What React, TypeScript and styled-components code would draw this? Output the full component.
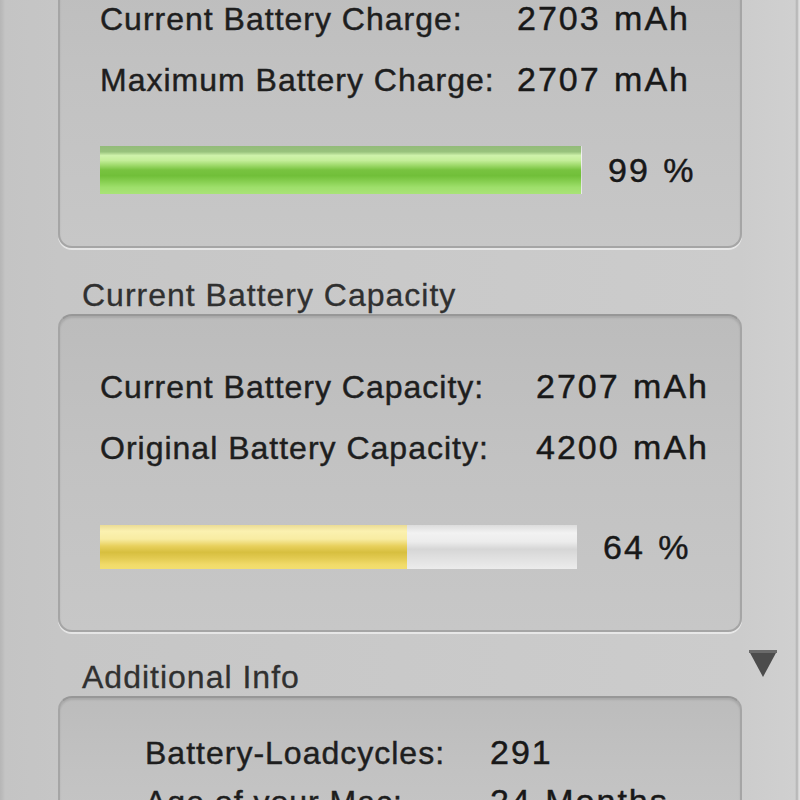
import React from "react";
import styled, { createGlobalStyle } from "styled-components";

const Global = createGlobalStyle`
  html, body { margin: 0; padding: 0; background: #c6c6c6; }
  #root { width: 800px; height: 800px; overflow: hidden; }
`;

const Window = styled.div`
  width: 800px;
  height: 800px;
  overflow: hidden;
  box-sizing: border-box;
  padding: 0 58px;
  background: linear-gradient(
    to right,
    #b6b6b6 0px,
    #bdbdbd 3px,
    #c4c4c4 5px,
    #c6c6c6 60px,
    #cccccc 740px,
    #d0d0d0 795px,
    #b2b2b2 797px,
    #dedede 799px
  );
  font-family: "Liberation Sans", Arial, sans-serif;
  color: #1e1e1e;
`;

const Stack = styled.div`
  display: flex;
  flex-direction: column;
  margin-top: -54px;
`;

const Section = styled.section<{ $gap: number }>`
  display: flex;
  flex-direction: column;
  margin-top: ${(p) => p.$gap}px;
`;

const Header = styled.div`
  display: flex;
  justify-content: space-between;
  align-items: flex-start;
  margin-right: -38px;
  margin-bottom: 1px;
  padding-left: 24px;
`;

const Title = styled.h2`
  margin: 0;
  font-weight: normal;
  font-size: 32px;
  line-height: 36px;
  letter-spacing: 1px;
  color: #303030;
  -webkit-text-stroke: 0.3px #303030;
`;

const Disclosure = styled.svg`
  margin-top: -9px;
  margin-right: 3px;
  flex: none;
`;

const Panel = styled.div<{ $padTop: number; $padBottom: number; $padLeft: number }>`
  border: 2px solid #a5a5a5;
  border-top-color: #979797;
  border-radius: 14px;
  background: linear-gradient(to bottom, #bcbcbc 0%, #c2c2c2 45%, #c7c7c7 100%);
  box-shadow: inset 0 2px 2px rgba(0, 0, 0, 0.1), 0 2px 0 rgba(255, 255, 255, 0.55);
  padding: ${(p) => p.$padTop}px 0 ${(p) => p.$padBottom}px ${(p) => p.$padLeft}px;
`;

const Rows = styled.div<{ $gap: number }>`
  display: grid;
  row-gap: ${(p) => p.$gap}px;
`;

const Row = styled.div<{ $labelWidth: number }>`
  display: grid;
  grid-template-columns: ${(p) => p.$labelWidth}px auto;
  align-items: baseline;
`;

const Label = styled.span`
  font-size: 32px;
  line-height: 36px;
  letter-spacing: 1px;
  color: #1e1e1e;
  -webkit-text-stroke: 0.45px #1e1e1e;
  white-space: nowrap;
`;

const Value = styled.span`
  font-size: 34px;
  line-height: 36px;
  letter-spacing: 2px;
  word-spacing: 2px;
  color: #181818;
  -webkit-text-stroke: 0.45px #181818;
  white-space: nowrap;
`;

const BarRow = styled.div<{ $barWidth: number; $top: number }>`
  display: grid;
  grid-template-columns: ${(p) => p.$barWidth}px auto;
  column-gap: 26px;
  align-items: center;
  margin-top: ${(p) => p.$top}px;
`;

const Track = styled.div<{ $height: number }>`
  height: ${(p) => p.$height}px;
  display: flex;
  background: linear-gradient(
    to bottom,
    #dcdcdc 0%,
    #f2f2f2 18%,
    #ececec 38%,
    #d6d6d6 55%,
    #dedede 70%,
    #ececec 100%
  );
`;

const Fill = styled.div<{ $tone: "green" | "yellow" }>`
  height: 100%;
  background: ${(p) =>
    p.$tone === "green"
      ? `linear-gradient(to bottom,
          #93bb79 0%, #98c27c 12%, #cff3ab 20%, #c4ee9a 30%,
          #9fda6c 40%, #78c340 50%, #71bf39 62%, #87cf51 74%,
          #9edf6b 86%, #a9e377 100%)`
      : `linear-gradient(to bottom,
          #eadb95 0%, #fbf1b0 14%, #f8eca2 32%, #e8d05c 48%,
          #d7bf3f 62%, #e3cb52 76%, #f1db69 90%, #f3de70 100%)`};
`;

const Percent = styled.span`
  font-size: 34px;
  line-height: 36px;
  letter-spacing: 2px;
  word-spacing: 2px;
  color: #181818;
  -webkit-text-stroke: 0.45px #181818;
  white-space: nowrap;
`;

type Stat = { label: string; value: string };

function StatRows({ items, labelWidth, gap }: { items: Stat[]; labelWidth: number; gap: number }) {
  return (
    <Rows $gap={gap}>
      {items.map((s) => (
        <Row key={s.label} $labelWidth={labelWidth}>
          <Label>{s.label}</Label>
          <Value>{s.value}</Value>
        </Row>
      ))}
    </Rows>
  );
}

function Meter({
  current,
  max,
  tone,
  width,
  height,
  top,
}: {
  current: number;
  max: number;
  tone: "green" | "yellow";
  width: number;
  height: number;
  top: number;
}) {
  const pct = (current / max) * 100;
  return (
    <BarRow $barWidth={width} $top={top}>
      <Track $height={height}>
        <Fill $tone={tone} style={{ width: `${pct}%` }} />
      </Track>
      <Percent>{Math.floor(pct)} %</Percent>
    </BarRow>
  );
}

export default function App() {
  return (
    <>
      <Global />
      <Window>
        <Stack>
          <Section $gap={0}>
            <Panel $padTop={52} $padBottom={52} $padLeft={40}>
              <StatRows
                labelWidth={417}
                gap={24}
                items={[
                  { label: "Current Battery Charge:", value: "2703 mAh" },
                  { label: "Maximum Battery Charge:", value: "2707 mAh" },
                ]}
              />
              <Meter current={2703} max={2707} tone="green" width={482} height={48} top={48} />
            </Panel>
          </Section>

          <Section $gap={29}>
            <Header>
              <Title>Current Battery Capacity</Title>
            </Header>
            <Panel $padTop={52} $padBottom={61} $padLeft={40}>
              <StatRows
                labelWidth={436}
                gap={24}
                items={[
                  { label: "Current Battery Capacity:", value: "2707 mAh" },
                  { label: "Original Battery Capacity:", value: "4200 mAh" },
                ]}
              />
              <Meter current={2707} max={4200} tone="yellow" width={477} height={44} top={59} />
            </Panel>
          </Section>

          <Section $gap={27}>
            <Header>
              <Title>Additional Info</Title>
              <Disclosure width="28" height="27" viewBox="0 0 28 27" aria-hidden="true">
                <polygon points="0,1 28,1 14,27" fill="#4c4c4c" />
                <rect x="0" y="0" width="28" height="3" fill="#6a6a6a" />
              </Disclosure>
            </Header>
            <Panel $padTop={36} $padBottom={40} $padLeft={85}>
              <StatRows
                labelWidth={345}
                gap={12}
                items={[
                  { label: "Battery-Loadcycles:", value: "291" },
                  { label: "Age of your Mac:", value: "24 Months" },
                ]}
              />
            </Panel>
          </Section>
        </Stack>
      </Window>
    </>
  );
}
